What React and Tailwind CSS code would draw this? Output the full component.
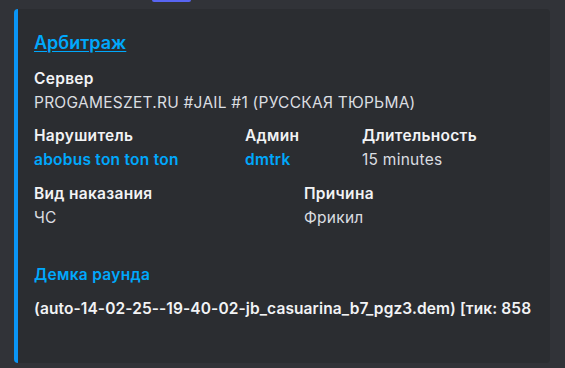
const FONT = "font-['Inter','Noto_Sans',sans-serif]";

function Field({ name, children, className = "" }) {
  return (
    <div className={className}>
      <div className="text-[15.5px] leading-[22px] font-semibold tracking-[0.3px] text-[#f2f3f5]">{name}</div>
      <div className="mt-[2px] text-[15.5px] leading-[22px] tracking-[0.25px] text-[#dbdee1]">{children}</div>
    </div>
  );
}

export default function App() {
  return (
    <div className={`w-[565px] h-[368px] bg-[#313338] overflow-hidden ${FONT}`}>
      {/* ── cut-off button above ── */}
      <div className="h-[9px] flex">
        <div className="ml-[152px] w-[39px] h-[2px] rounded-b-full bg-[#5865f2]" />
      </div>

      {/* ── Embed ── */}
      <div className="ml-[14px] w-[536px] h-[354px] rounded-[4px] border-l-4 border-[#0a95f5] bg-[#2b2d31] pl-[16px] pt-[23px]">
        <a className="block text-[18px] leading-[22px] font-semibold text-[#00a8fc] underline underline-offset-2">
          Арбитраж
        </a>

        <Field name="Сервер" className="mt-[14px]">
          PROGAMESZET.RU #JAIL #1 (РУССКАЯ ТЮРЬМА)
        </Field>

        <div className="mt-[11px] grid grid-cols-[211px_117px_1fr]">
          <Field name="Нарушитель">
            <span className="font-semibold text-[#00a8fc]">abobus ton ton ton</span>
          </Field>
          <Field name="Админ">
            <span className="font-semibold text-[#00a8fc]">dmtrk</span>
          </Field>
          <Field name="Длительность">15 minutes</Field>
        </div>

        <div className="mt-[12px] grid grid-cols-[270px_1fr]">
          <Field name="Вид наказания">ЧС</Field>
          <Field name="Причина">Фрикил</Field>
        </div>

        <div className="mt-[35px] text-[15.5px] leading-[22px] font-semibold tracking-[0.3px] text-[#00a8fc]">Демка раунда</div>
        <div className="mt-[12px] text-[15.5px] leading-[22px] font-semibold tracking-[0.1px] text-[#f2f3f5] whitespace-nowrap">
          (auto-14-02-25--19-40-02-jb_casuarina_b7_pgz3.dem) [тик: 858
        </div>
      </div>
    </div>
  );
}
